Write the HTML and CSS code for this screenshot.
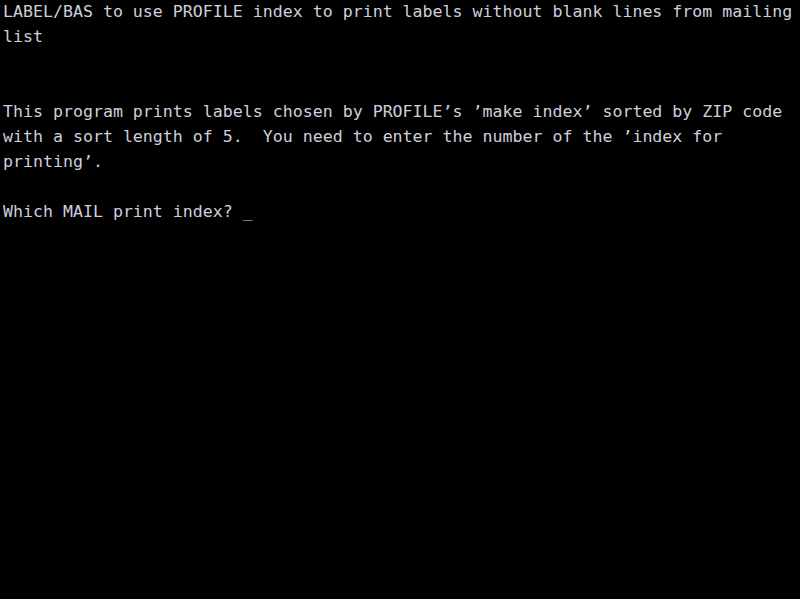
FILE: index.html
```html
<!DOCTYPE html>
<html>
<head>
<meta charset="utf-8">
<link rel="stylesheet" href="styles.css">
</head>
<body>
<pre class="screen">LABEL/BAS to use PROFILE index to print labels without blank lines from mailing
list


This program prints labels chosen by PROFILE’s ’make index’ sorted by ZIP code
with a sort length of 5.  You need to enter the number of the ’index for
printing’.

Which MAIL print index? _</pre>
</body>
</html>
```
FILE: styles.css
```css
html, body {
  margin: 0;
  padding: 0;
  background: #000;
  width: 800px;
  height: 599px;
  overflow: hidden;
}
.screen {
  margin: 0;
  padding: 0 0 0 3px;
  font-family: "DejaVu Sans Mono", "Liberation Mono", monospace;
  font-size: 16.6px;
  line-height: 24.96px;
  color: #cfcfdc;
  white-space: pre;
}
```
